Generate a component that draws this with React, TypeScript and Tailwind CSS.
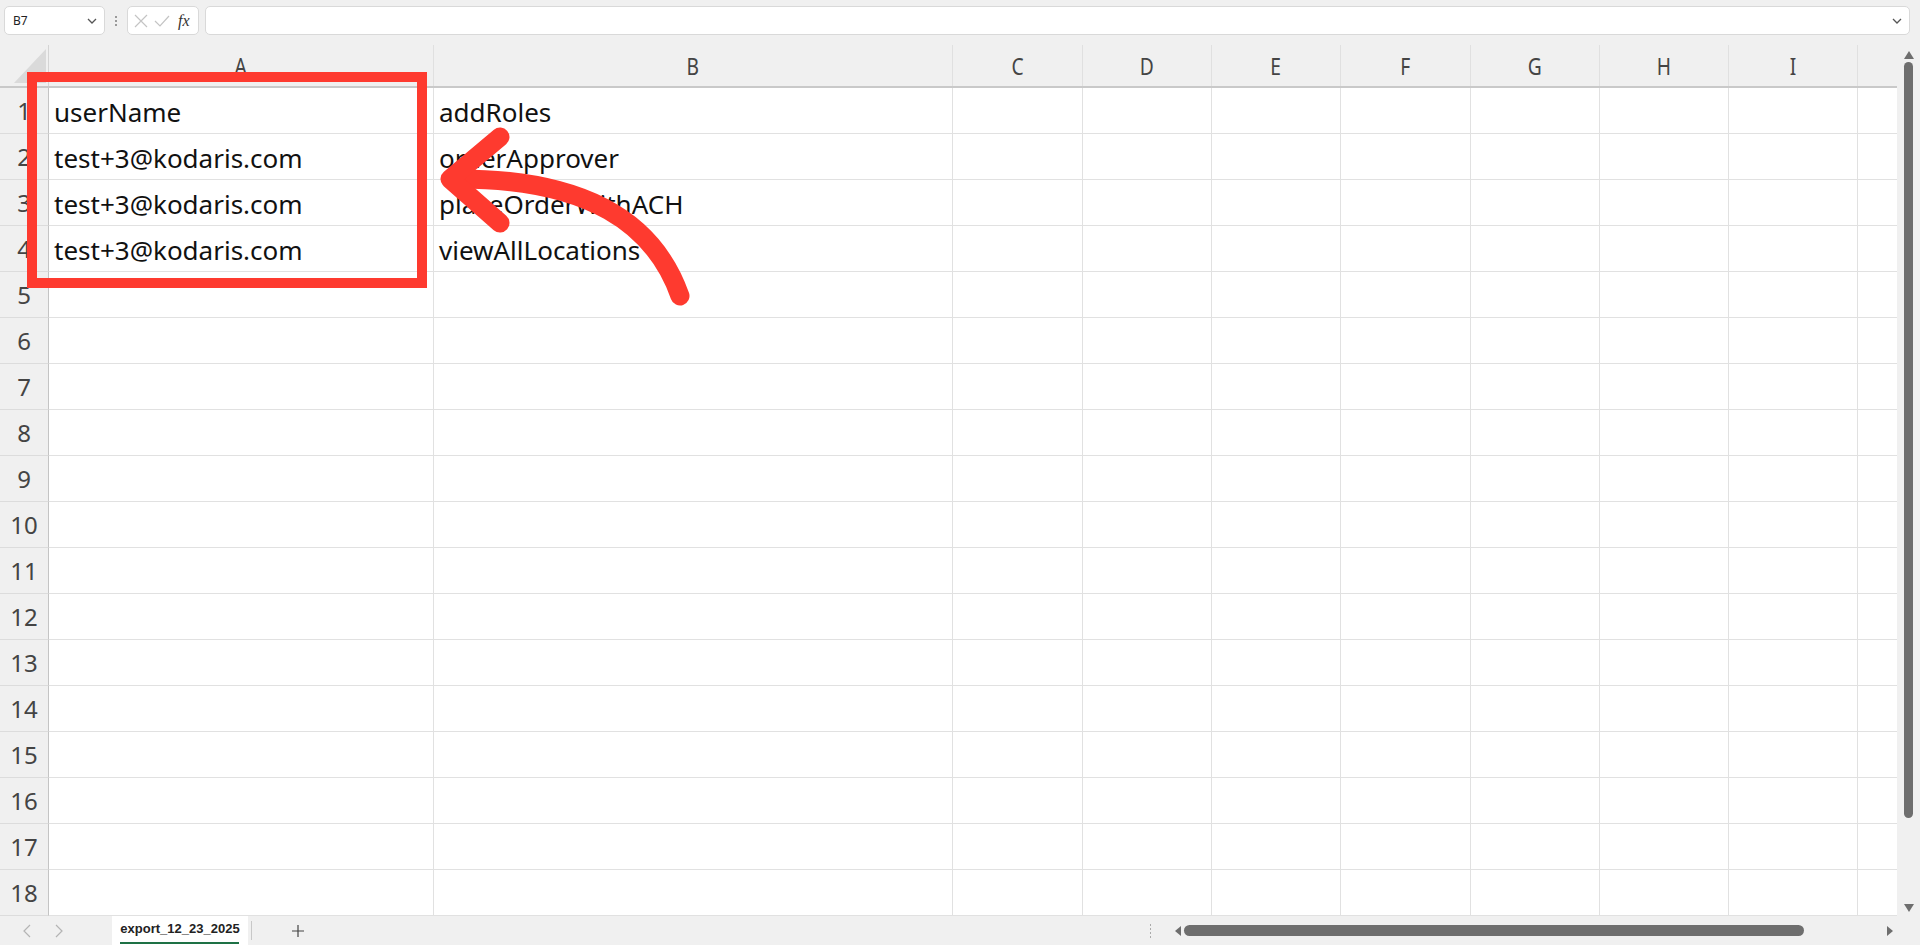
import React from "react";

const cols = [
  { name: "A", w: 385 },
  { name: "B", w: 519 },
  { name: "C", w: 130 },
  { name: "D", w: 129 },
  { name: "E", w: 129 },
  { name: "F", w: 130 },
  { name: "G", w: 129 },
  { name: "H", w: 129 },
  { name: "I", w: 129 },
];

const data: string[][] = [
  ["userName", "addRoles"],
  ["test+3@kodaris.com", "orderApprover"],
  ["test+3@kodaris.com", "placeOrderWithACH"],
  ["test+3@kodaris.com", "viewAllLocations"],
];

const rows = Array.from({ length: 18 }, (_, i) => i + 1);

const font = { fontFamily: '"Noto Sans", "Open Sans", sans-serif' };

// top bar with name box + formula bar
const Toolbar = () => (
  <div className="h-[45px] flex items-start pt-[6px] pl-[4px] bg-[#f0f0f0]">
    <div className="w-[101px] h-[29px] bg-white border border-[#d9d9d9] rounded-[5px] flex items-center justify-between pl-[8px] pr-[6px]">
      <span className="text-[12px] text-[#222]">B7</span>
      <svg width="12" height="8" viewBox="0 0 12 8">
        <path d="M2 2 L6 6 L10 2" fill="none" stroke="#555" strokeWidth="1.3" />
      </svg>
    </div>
    <div className="w-[22px] h-[29px] flex flex-col items-center justify-center gap-[2px]">
      <div className="w-[2px] h-[2px] bg-[#9a9a9a]" />
      <div className="w-[2px] h-[2px] bg-[#9a9a9a]" />
      <div className="w-[2px] h-[2px] bg-[#9a9a9a]" />
    </div>
    <div className="w-[72px] h-[29px] bg-white border border-[#d9d9d9] rounded-[5px] flex items-center pl-[6px] gap-[6px]">
      <svg width="14" height="14" viewBox="0 0 14 14">
        <path d="M1 1 L13 13 M13 1 L1 13" stroke="#c4c4c4" strokeWidth="1.2" />
      </svg>
      <svg width="16" height="14" viewBox="0 0 16 14">
        <path d="M1 7 L6 12 L15 2" fill="none" stroke="#c4c4c4" strokeWidth="1.2" />
      </svg>
      <span className="text-[16px] italic text-[#333] ml-[2px]" style={{ fontFamily: '"Liberation Serif", serif' }}>
        fx
      </span>
    </div>
    <div className="ml-[6px] w-[1705px] h-[29px] bg-white border border-[#d9d9d9] rounded-[5px] flex items-center justify-end pr-[6px]">
      <svg width="12" height="8" viewBox="0 0 12 8">
        <path d="M2 2 L6 6 L10 2" fill="none" stroke="#555" strokeWidth="1.3" />
      </svg>
    </div>
  </div>
);

const App = () => {
  return (
    <div className="relative w-[1920px] h-[945px] overflow-hidden bg-[#f0f0f0]" style={font}>
      <Toolbar />

      <div className="flex">
        {/* sheet grid */}
        <div className="w-[1897px] flex flex-col">
          {/* column headers */}
          <div className="flex h-[43px] border-b-2 border-[#c9c9c9] bg-[#f0f0f0]">
            <div className="w-[49px] shrink-0 flex items-end justify-end pb-[3px] pr-[2px] border-r border-[#d4d4d4]">
              <svg width="32" height="34" viewBox="0 0 32 34">
                <polygon points="32,0 32,34 0,34" fill="#dadada" />
              </svg>
            </div>
            {cols.map((c) => (
              <div
                key={c.name}
                className="shrink-0 flex items-center justify-center border-r border-[#e0e0e0] text-[24px] text-[#444]"
                style={{ width: c.w }}
              >
                <span className="scale-x-80 inline-block">{c.name}</span>
              </div>
            ))}
            <div className="flex-1" />
          </div>

          {/* rows */}
          {rows.map((r) => (
            <div key={r} className="flex h-[46px]">
              <div className="w-[49px] shrink-0 flex items-center justify-center bg-[#f0f0f0] border-r border-[#c4c4c4] border-b border-b-[#dcdcdc] text-[24px] text-[#444]">
                {r}
              </div>
              {cols.map((c, ci) => (
                <div
                  key={c.name}
                  className="shrink-0 bg-white border-r border-b border-[#e1e1e1] flex items-center pl-[5px] pt-[4px] text-[26px] text-[#111] whitespace-nowrap"
                  style={{ width: c.w }}
                >
                  {data[r - 1]?.[ci] ?? ""}
                </div>
              ))}
              <div className="flex-1 bg-white border-b border-[#e1e1e1]" />
            </div>
          ))}
        </div>

        {/* vertical scrollbar */}
        <div className="w-[23px] flex flex-col items-center pt-[6px] pb-[4px] bg-[#f0f0f0]">
          <svg width="10" height="8" viewBox="0 0 10 8">
            <polygon points="5,0 10,8 0,8" fill="#6e6e6e" />
          </svg>
          <div className="w-[9px] flex-1 mt-[3px] mb-[86px] rounded-full bg-[#6e6e6e]" />
          <svg width="10" height="8" viewBox="0 0 10 8">
            <polygon points="0,0 10,0 5,8" fill="#6e6e6e" />
          </svg>
        </div>
      </div>

      {/* sheet tabs + horizontal scrollbar */}
      <div className="h-[29px] flex items-stretch bg-[#f0f0f0]">
        <div className="w-[112px] flex items-center pl-[22px] gap-[22px] text-[#b0b0b0]">
          <svg width="10" height="14" viewBox="0 0 10 14">
            <path d="M8 1 L2 7 L8 13" fill="none" stroke="#b4b4b4" strokeWidth="1.2" />
          </svg>
          <svg width="10" height="14" viewBox="0 0 10 14">
            <path d="M2 1 L8 7 L2 13" fill="none" stroke="#b4b4b4" strokeWidth="1.2" />
          </svg>
        </div>
        <div className="w-[136px] bg-white flex flex-col items-center justify-center relative">
          <span className="text-[13px] font-semibold text-[#222] leading-none pb-[4px]" style={{ fontFamily: '"Liberation Sans", sans-serif' }}>
            export_12_23_2025
          </span>
          <div className="absolute bottom-[1px] left-[8px] right-[9px] h-[2px] bg-[#1e7145]" />
        </div>
        <div className="w-[1px] my-[5px] ml-[3px] bg-[#c8c8c8]" />
        <div className="w-[92px] flex items-center justify-center">
          <svg width="14" height="14" viewBox="0 0 14 14">
            <path d="M7 1 V13 M1 7 H13" stroke="#444" strokeWidth="1.2" />
          </svg>
        </div>
        <div className="flex-1" />
        <div className="w-[1px] flex flex-col justify-center gap-[2px] mr-[24px]">
          <div className="w-[1px] h-[2px] bg-[#aaa]" />
          <div className="w-[1px] h-[2px] bg-[#aaa]" />
          <div className="w-[1px] h-[2px] bg-[#aaa]" />
          <div className="w-[1px] h-[2px] bg-[#aaa]" />
        </div>
        <div className="flex items-center">
          <svg width="6" height="10" viewBox="0 0 6 10">
            <polygon points="6,0 6,10 0,5" fill="#6e6e6e" />
          </svg>
          <div className="w-[620px] h-[11px] ml-[3px] rounded-full bg-[#6e6e6e]" />
          <div className="w-[83px]" />
          <svg width="6" height="10" viewBox="0 0 6 10">
            <polygon points="0,0 6,5 0,10" fill="#6e6e6e" />
          </svg>
        </div>
        <div className="w-[27px]" />
      </div>

      {/* annotation: red box */}
      <div className="absolute left-[27px] top-[72px] w-[400px] h-[216px] border-[10px] border-[#fe3a2f] pointer-events-none" />

      {/* annotation: curved arrow */}
      <svg className="absolute inset-0 pointer-events-none" width="1920" height="945" viewBox="0 0 1920 945">
        <path
          d="M680 296 C 655 225, 590 178, 455 179"
          fill="none"
          stroke="#fe3a2f"
          strokeWidth="19"
          strokeLinecap="round"
        />
        <path
          d="M500 137 L 450 179 L 500 223"
          fill="none"
          stroke="#fe3a2f"
          strokeWidth="19"
          strokeLinecap="round"
          strokeLinejoin="round"
        />
      </svg>
    </div>
  );
};

export default App;
